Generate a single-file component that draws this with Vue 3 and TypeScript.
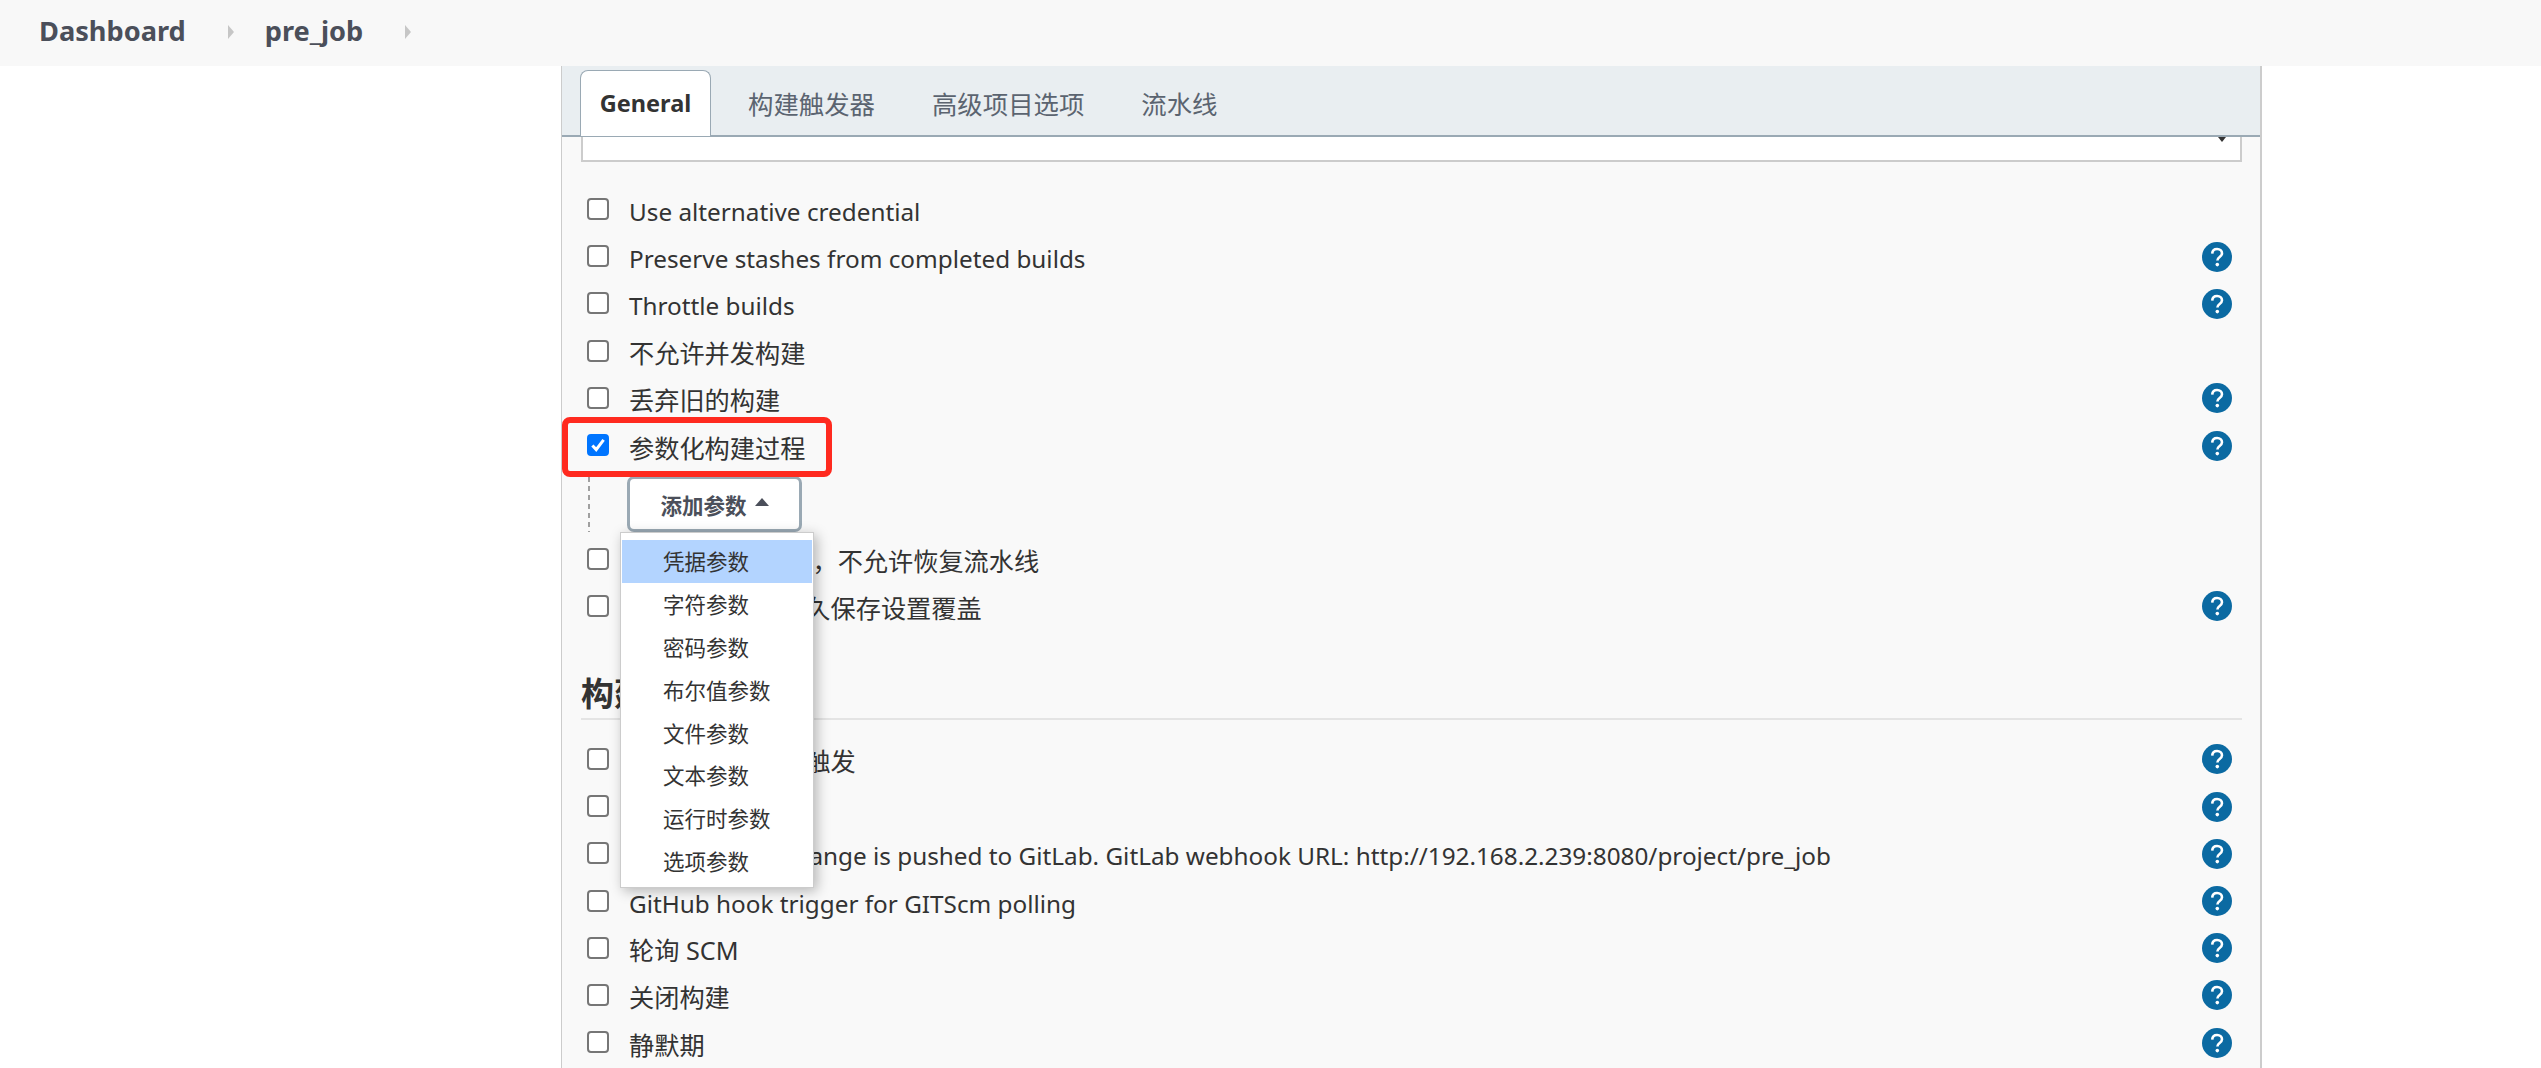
<script setup lang="ts">
interface Row { label: string; help: boolean; checked?: boolean; cjk?: boolean }
const groupA: Row[] = [
  { label: 'Use alternative credential', help: false },
  { label: 'Preserve stashes from completed builds', help: true },
  { label: 'Throttle builds', help: true },
  { label: '不允许并发构建', help: false, cjk: true },
  { label: '丢弃旧的构建', help: true, cjk: true },
  { label: '参数化构建过程', help: true, checked: true, cjk: true },
]
const groupB: Row[] = [
  { label: '在Master重启后，不允许恢复流水线', help: false, cjk: true },
  { label: '流水线效率、持久保存设置覆盖', help: true, cjk: true },
]
const groupC: Row[] = [
  { label: '其他工程构建后触发', help: true, cjk: true },
  { label: '定时构建', help: true, cjk: true },
  { label: 'Build when a change is pushed to GitLab. GitLab webhook URL: http://192.168.2.239:8080/project/pre_job', help: true },
  { label: 'GitHub hook trigger for GITScm polling', help: true },
  { label: '轮询 SCM', help: true, cjk: true },
  { label: '关闭构建', help: true, cjk: true },
  { label: '静默期', help: true, cjk: true },
]
const tabs = ['构建触发器', '高级项目选项', '流水线']
const menu = ['凭据参数', '字符参数', '密码参数', '布尔值参数', '文件参数', '文本参数', '运行时参数', '选项参数']
</script>

<template>
  <div class="page">
    <header class="topbar">
      <span class="crumb">Dashboard</span>
      <svg class="chev" width="8" height="14" viewBox="0 0 8 14"><path d="M1 0 L7 7 L1 14 Z" /></svg>
      <span class="crumb">pre_job</span>
      <svg class="chev" width="8" height="14" viewBox="0 0 8 14"><path d="M1 0 L7 7 L1 14 Z" /></svg>
    </header>
    <main class="main">
      <section class="panel">
        <nav class="tabbar">
          <div class="tab active">General</div>
          <div v-for="t in tabs" :key="t" class="tab">{{ t }}</div>
        </nav>
        <div class="content">
          <div class="selectbox">
            <svg class="selectcaret" width="10" height="5" viewBox="0 0 10 5"><path d="M1 0 H9 L5 5 Z" /></svg>
          </div>
          <div class="rows first">
            <div v-for="r in groupA" :key="r.label" class="row">
              <span class="box" :class="{ on: r.checked }">
                <svg v-if="r.checked" width="18" height="18" viewBox="0 0 18 18"><path d="M3.4 9.4 L7.2 13.6 L14.6 3.8" fill="none" stroke="#fff" stroke-width="3" /></svg>
              </span>
              <span class="label" :class="{ cjk: r.cjk }">{{ r.label }}</span>
              <svg v-if="r.help" class="help" width="30" height="30" viewBox="0 0 30 30">
                <circle cx="15" cy="15" r="15" fill="#0b6aa2" />
                <path d="M10.2 11.6 C10.4 8.6 12.4 7 15.1 7 C18 7 20 8.8 20 11.2 C20 13.2 18.8 14.2 17.4 15.2 C16 16.2 15.4 16.9 15.4 18.6" fill="none" stroke="#fff" stroke-width="2.6" />
                <circle cx="15.3" cy="22.6" r="1.8" fill="#fff" />
              </svg>
            </div>
          </div>
          <div class="nested">
            <button class="addbtn" type="button">添加参数<svg class="up" width="14" height="8" viewBox="0 0 14 8"><path d="M7 0 L14 8 H0 Z" /></svg></button>
          </div>
          <div class="rows">
            <div v-for="r in groupB" :key="r.label" class="row">
              <span class="box"></span>
              <span class="label" :class="{ cjk: r.cjk }">{{ r.label }}</span>
              <svg v-if="r.help" class="help" width="30" height="30" viewBox="0 0 30 30">
                <circle cx="15" cy="15" r="15" fill="#0b6aa2" />
                <path d="M10.2 11.6 C10.4 8.6 12.4 7 15.1 7 C18 7 20 8.8 20 11.2 C20 13.2 18.8 14.2 17.4 15.2 C16 16.2 15.4 16.9 15.4 18.6" fill="none" stroke="#fff" stroke-width="2.6" />
                <circle cx="15.3" cy="22.6" r="1.8" fill="#fff" />
              </svg>
            </div>
          </div>
          <h2 class="heading">构建触发器</h2>
          <div class="rows">
            <div v-for="r in groupC" :key="r.label" class="row">
              <span class="box"></span>
              <span class="label" :class="{ cjk: r.cjk }">{{ r.label }}</span>
              <svg v-if="r.help" class="help" width="30" height="30" viewBox="0 0 30 30">
                <circle cx="15" cy="15" r="15" fill="#0b6aa2" />
                <path d="M10.2 11.6 C10.4 8.6 12.4 7 15.1 7 C18 7 20 8.8 20 11.2 C20 13.2 18.8 14.2 17.4 15.2 C16 16.2 15.4 16.9 15.4 18.6" fill="none" stroke="#fff" stroke-width="2.6" />
                <circle cx="15.3" cy="22.6" r="1.8" fill="#fff" />
              </svg>
            </div>
          </div>
        </div>
        <div class="redbox"></div>
        <ul class="menu">
          <li v-for="(m, i) in menu" :key="m" :class="{ hi: i === 0 }">{{ m }}</li>
        </ul>
      </section>
    </main>
  </div>
</template>

<style>
html, body { margin: 0; background: #fff; }
</style>

<style scoped>
.page {
  width: 2541px;
  height: 1068px;
  overflow: hidden;
  background: #fff;
  color: #333;
  font-family: "Noto Sans", "Noto Sans CJK SC", sans-serif;
}
.topbar {
  height: 66px;
  box-sizing: border-box;
  background: #f8f8f8;
  display: flex;
  align-items: center;
  padding: 0 0 6px 39px;
}
.crumb { font-size: 27.2px; font-weight: 700; color: #4b4f5a; }
.chev { margin: 4px 30px 0 41px; fill: #c6c6c6; }
.main { padding-left: 561px; }
.panel {
  position: relative;
  width: 1701px;
  height: 1002px;
  box-sizing: border-box;
  background: #f9f9f9;
  border-left: 1px solid #ccc;
  border-right: 2px solid #ccc;
}
.tabbar {
  height: 71px;
  box-sizing: border-box;
  background: #e9eef1;
  border-bottom: 2px solid #9aa9b4;
  display: flex;
  padding: 4px 0 0 18px;
  font-size: 25.4px;
}
.tab {
  height: 66px;
  box-sizing: border-box;
  padding: 15px 20px 0;
  color: #5b6470;
  margin-right: 17px;
  white-space: nowrap;
}
.tab.active {
  width: 131px;
  padding: 16px 0 0;
  text-align: center;
  background: #fff;
  border: 1px solid #9aa9b4;
  border-bottom: 0;
  border-radius: 8px 8px 0 0;
  color: #333;
  font-weight: 700;
  font-size: 23.5px;
  margin-right: 17px;
}
.content { padding: 0 18px 0 19px; }
.selectbox {
  position: relative;
  height: 25px;
  box-sizing: border-box;
  background: #fff;
  border: 2px solid #ccc;
  border-top: 0;
}
.selectcaret { position: absolute; right: 13px; top: 0; fill: #333; }
.rows.first { margin-top: 24px; }
.row {
  height: 47.2px;
  display: flex;
  align-items: center;
  font-size: 24.3px;
  padding-left: 6px;
}
.box {
  width: 22px;
  height: 22px;
  box-sizing: border-box;
  border: 2px solid #767676;
  border-radius: 4px;
  background: #fff;
  flex: none;
  margin-top: -1px;
  display: flex;
  align-items: center;
  justify-content: center;
}
.box.on { background: #0075ff; border-color: #0075ff; }
.label { margin-left: 20px; position: relative; top: 2px; white-space: nowrap; }
.label.cjk { font-size: 25.2px; top: 1px; }
.help { margin-left: auto; margin-right: 10px; flex: none; }
.nested {
  height: 66.4px;
  margin-left: 7px;
  padding-left: 39px;
  padding-top: 7px;
  box-sizing: border-box;
  background: repeating-linear-gradient(to bottom, #a0a0a0 0 5px, transparent 5px 9px) 0 8px / 2px 55px no-repeat;
}
.addbtn {
  width: 175px;
  height: 56px;
  box-sizing: border-box;
  background: #fff;
  border: 3px solid #9aa9b4;
  border-radius: 7px;
  font: 700 21.5px "Noto Sans", "Noto Sans CJK SC", sans-serif;
  color: #4b4f5a;
  display: flex;
  align-items: center;
  justify-content: center;
  padding: 0;
}
.up { margin-left: 8px; fill: #4b4f5a; margin-bottom: 4px; }
.heading {
  margin: 40px 0 0;
  height: 48.4px;
  border-bottom: 2px solid #e4e4e4;
  font-size: 33px;
  line-height: 48px;
  color: #333;
  font-weight: 700;
}
.heading + .rows { margin-top: 15.6px; }
.redbox {
  position: absolute;
  left: 0;
  top: 351px;
  width: 270px;
  height: 60px;
  box-sizing: border-box;
  border: 6px solid #ff2a1f;
  border-radius: 8px;
}
.menu {
  position: absolute;
  left: 58px;
  top: 466px;
  width: 194px;
  height: 356px;
  box-sizing: border-box;
  margin: 0;
  padding: 7px 1px;
  list-style: none;
  background: #fff;
  border: 1px solid #ccc;
  box-shadow: 3px 3px 12px rgba(0, 0, 0, 0.28);
  font-size: 21.5px;
}
.menu li { height: 42.9px; line-height: 43px; padding-left: 41px; }
.menu li.hi { background: #b3d4ff; }
</style>
